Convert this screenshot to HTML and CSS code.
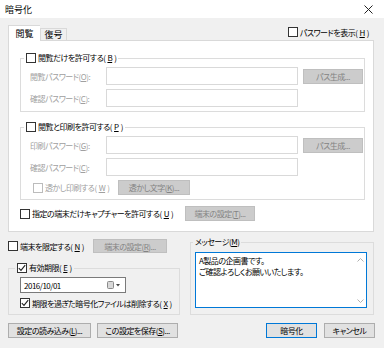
FILE: index.html
```html
<!DOCTYPE html>
<html lang="ja">
<head>
    <meta charset="UTF-8">
    <title>暗号化</title>
    <link rel="stylesheet" href="styles.css">
</head>
<body>
    <div class="window">
        <div class="titlebar">
            <span class="title">暗号化</span>
            <svg class="close" width="9" height="9" viewBox="0 0 9 9"><path d="M0.5 0.5 L8.5 8.5 M8.5 0.5 L0.5 8.5" stroke="#222" stroke-width="1"/></svg>
        </div>

        <div class="content">
            <div class="tab-row">
                <div class="tabs">
                    <span class="tab active">閲覧</span>
                    <span class="tab">復号</span>
                </div>
                <label class="check show-pass"><span class="box"></span>パスワードを表示(<u>H</u>)</label>
            </div>

            <!-- 閲覧タブ -->
            <div class="panel">
                <fieldset class="group">
                    <legend><label class="check"><span class="box"></span>閲覧だけを許可する(<u>B</u>)</label></legend>
                    <div class="rows">
                        <div class="row">
                            <span class="lbl dis">閲覧パスワード(<u>O</u>):</span>
                            <span class="field"></span>
                            <span class="btn dis">パス生成...</span>
                        </div>
                        <div class="row">
                            <span class="lbl dis">確認パスワード(<u>C</u>):</span>
                            <span class="field"></span>
                        </div>
                    </div>
                </fieldset>

                <fieldset class="group second">
                    <legend><label class="check"><span class="box"></span>閲覧と印刷を許可する(<u>P</u>)</label></legend>
                    <div class="rows">
                        <div class="row">
                            <span class="lbl dis">印刷パスワード(<u>G</u>):</span>
                            <span class="field"></span>
                            <span class="btn dis">パス生成...</span>
                        </div>
                        <div class="row">
                            <span class="lbl dis">確認パスワード(<u>C</u>):</span>
                            <span class="field"></span>
                        </div>
                        <div class="row-inline watermark">
                            <label class="check dis"><span class="box"></span>透かし印刷する(<u>W</u>)</label>
                            <span class="btn dis">透かし文字(<u>K</u>)...</span>
                        </div>
                    </div>
                </fieldset>

                <div class="row-inline capture">
                    <label class="check"><span class="box"></span>指定の端末だけキャプチャーを許可する(<u>U</u>)</label>
                    <span class="btn dis">端末の設定(<u>T</u>)...</span>
                </div>
            </div>

            <div class="lower">
                <div class="left-col">
                    <div class="row-inline limit">
                        <label class="check"><span class="box"></span>端末を限定する(<u>N</u>)</label>
                        <span class="btn dis">端末の設定(<u>R</u>)...</span>
                    </div>

                    <fieldset class="group expire">
                        <legend><label class="check"><span class="box checked"><svg width="8" height="8" viewBox="0 0 8 8"><path d="M0.8 4.2 L3 6.4 L7.2 1.2" fill="none" stroke="#222" stroke-width="1.1"/></svg></span>有効期限(<u>E</u>)</label></legend>
                        <div class="rows">
                            <div class="date">
                                <span>2016/10/01</span>
                                <span class="cal">
                                    <svg width="14" height="8" viewBox="0 0 14 8"><rect x="0.5" y="0.5" width="6" height="7" rx="1" fill="#d8d8d8" stroke="#8a8a8a"/><path d="M9 3 L13 3 L11 5.5 Z" fill="#444"/></svg>
                                </span>
                            </div>
                            <label class="check delete"><span class="box checked"><svg width="8" height="8" viewBox="0 0 8 8"><path d="M0.8 4.2 L3 6.4 L7.2 1.2" fill="none" stroke="#222" stroke-width="1.1"/></svg></span>期限を過ぎた暗号化ファイルは削除する(<u>X</u>)</label>
                        </div>
                    </fieldset>
                </div>

                <fieldset class="group message">
                    <legend>メッセージ(<u>M</u>)</legend>
                    <div class="memo">
                        <div class="memo-text">A製品の企画書です。<br>ご確認よろしくお願いいたします。</div>
                        <div class="scroll">
                            <svg width="7" height="4" viewBox="0 0 7 4"><path d="M0.5 3.5 L3.5 0.5 L6.5 3.5" fill="none" stroke="#b0b0b0"/></svg>
                            <svg width="7" height="4" viewBox="0 0 7 4"><path d="M0.5 0.5 L3.5 3.5 L6.5 0.5" fill="none" stroke="#b0b0b0"/></svg>
                        </div>
                    </div>
                </fieldset>
            </div>

            <div class="footer">
                <span class="btn load">設定の読み込み(<u>L</u>)...</span>
                <span class="btn save">この設定を保存(<u>S</u>)...</span>
                <span class="spacer"></span>
                <span class="btn default ok">暗号化</span>
                <span class="btn cancel">キャンセル</span>
            </div>
        </div>
    </div>
</body>
</html>
```

FILE: styles.css
```css
/* リセット */
* {
    margin: 0;
    padding: 0;
    box-sizing: border-box;
}

body {
    font-family: "Noto Sans CJK JP", "Noto Sans", sans-serif;
    font-feature-settings: "palt";
    font-size: 8px;
    letter-spacing: -0.5px;
    color: #000;
    background: #f0f0f0;
}

u {
    text-decoration: underline;
    text-underline-offset: 1px;
}

/* ウィンドウ */
.window {
    width: 384px;
    height: 348px;
    background: #f0f0f0;
}

.titlebar {
    height: 18px;
    background: #fff;
    display: flex;
    align-items: center;
    justify-content: space-between;
    padding: 0 11px 0 5px;
}

.title {
    font-size: 9px;
    letter-spacing: 0;
}

.content {
    padding: 0 9px 0 8px;
}

/* タブ */
.tab-row {
    height: 22px;
    display: flex;
    align-items: flex-end;
    justify-content: space-between;
}

.tabs {
    display: flex;
    align-items: flex-end;
}

.tab {
    height: 12px;
    width: 27px;
    border: 1px solid #d9d9d9;
    border-bottom: none;
    background: #f0f0f0;
    display: flex;
    align-items: center;
    justify-content: center;
    font-size: 9px;
    letter-spacing: 0;
}

.tab.active {
    height: 16px;
    width: 32px;
    background: #fff;
    margin-bottom: -1px;
    position: relative;
    z-index: 1;
    border-right: none;
}

.show-pass {
    align-self: center;
    margin-top: 6px;
    margin-right: 6px;
}

/* チェックボックス */
.check {
    display: inline-flex;
    align-items: center;
    gap: 2px;
    white-space: nowrap;
}

.box {
    width: 10px;
    height: 10px;
    border: 1px solid #333;
    background: #fff;
    display: inline-flex;
    align-items: center;
    justify-content: center;
    flex: none;
}

.check.dis {
    color: #a0a0a0;
}

.check.dis .box {
    border-color: #bcbcbc;
}

/* パネル */
.panel {
    width: 366px;
    background: #fff;
    border: 1px solid #d9d9d9;
    padding: 11px 8px 10px 11px;
}

.group {
    border: 1px solid #dcdcdc;
    padding: 0;
    min-width: 0;
}

.group legend {
    padding: 0 2px;
    margin-left: 3px;
    height: 12px;
    line-height: 12px;
}

.rows {
    display: flex;
    flex-direction: column;
    gap: 4px;
    padding: 3px 5px 4px 9px;
}

.row {
    display: grid;
    grid-template-columns: 71px 192px 60px;
    column-gap: 5px;
    align-items: center;
    height: 18px;
}

.dis {
    color: #a0a0a0;
}

.field {
    height: 18px;
    border: 1px solid #d9d9d9;
    background: #fff;
}

.second {
    margin-top: 9px;
}

/* ボタン */
.btn {
    height: 15px;
    display: inline-flex;
    align-items: center;
    justify-content: center;
    white-space: nowrap;
    background: #e1e1e1;
    border: 1px solid #adadad;
}

.btn.dis {
    background: #cccccc;
    border-color: #bfbfbf;
    color: #838383;
}

.row-inline {
    display: grid;
    align-items: center;
    height: 15px;
}

.watermark {
    grid-template-columns: 85px 72px;
    padding-left: 3px;
}

.capture {
    grid-template-columns: 165px 70px;
    margin-top: 6px;
}

/* 下部 */
.lower {
    display: grid;
    grid-template-columns: 172px 184px;
    column-gap: 10px;
    margin-top: 7px;
}

.limit {
    grid-template-columns: 85px 74px;
    height: 14px;
}

.limit .btn {
    height: 14px;
}

.expire {
    margin-top: 9px;
}

.expire legend {
    margin-left: 6px;
}

.expire .rows {
    gap: 4px;
    padding: 3px 5px 5px 11px;
}

.date {
    width: 106px;
    height: 16px;
    border: 1px solid #7a7a7a;
    background: #fff;
    display: flex;
    align-items: center;
    justify-content: space-between;
    padding: 0 4px 0 3px;
}

.cal {
    display: flex;
}

.delete {
    height: 12px;
}

.message {
    margin-top: -3px;
}

.message legend {
    margin-left: 2px;
}

.memo {
    margin: 4px 6px 6px 4px;
    height: 56px;
    border: 1px solid #0078d7;
    background: #fff;
    display: flex;
}

.memo-text {
    flex: 1;
    padding: 2px 3px;
    line-height: 11px;
}

.scroll {
    width: 12px;
    display: flex;
    flex-direction: column;
    justify-content: space-between;
    align-items: center;
    padding: 5px 0 4px;
}

/* フッター */
.footer {
    display: flex;
    align-items: center;
    margin-top: 8px;
}

.load {
    width: 83px;
}

.save {
    width: 81px;
    margin-left: 6px;
}

.spacer {
    flex: 1;
}

.ok {
    width: 51px;
    border-color: #0078d7;
}

.cancel {
    width: 51px;
    margin-left: 7px;
}
```
